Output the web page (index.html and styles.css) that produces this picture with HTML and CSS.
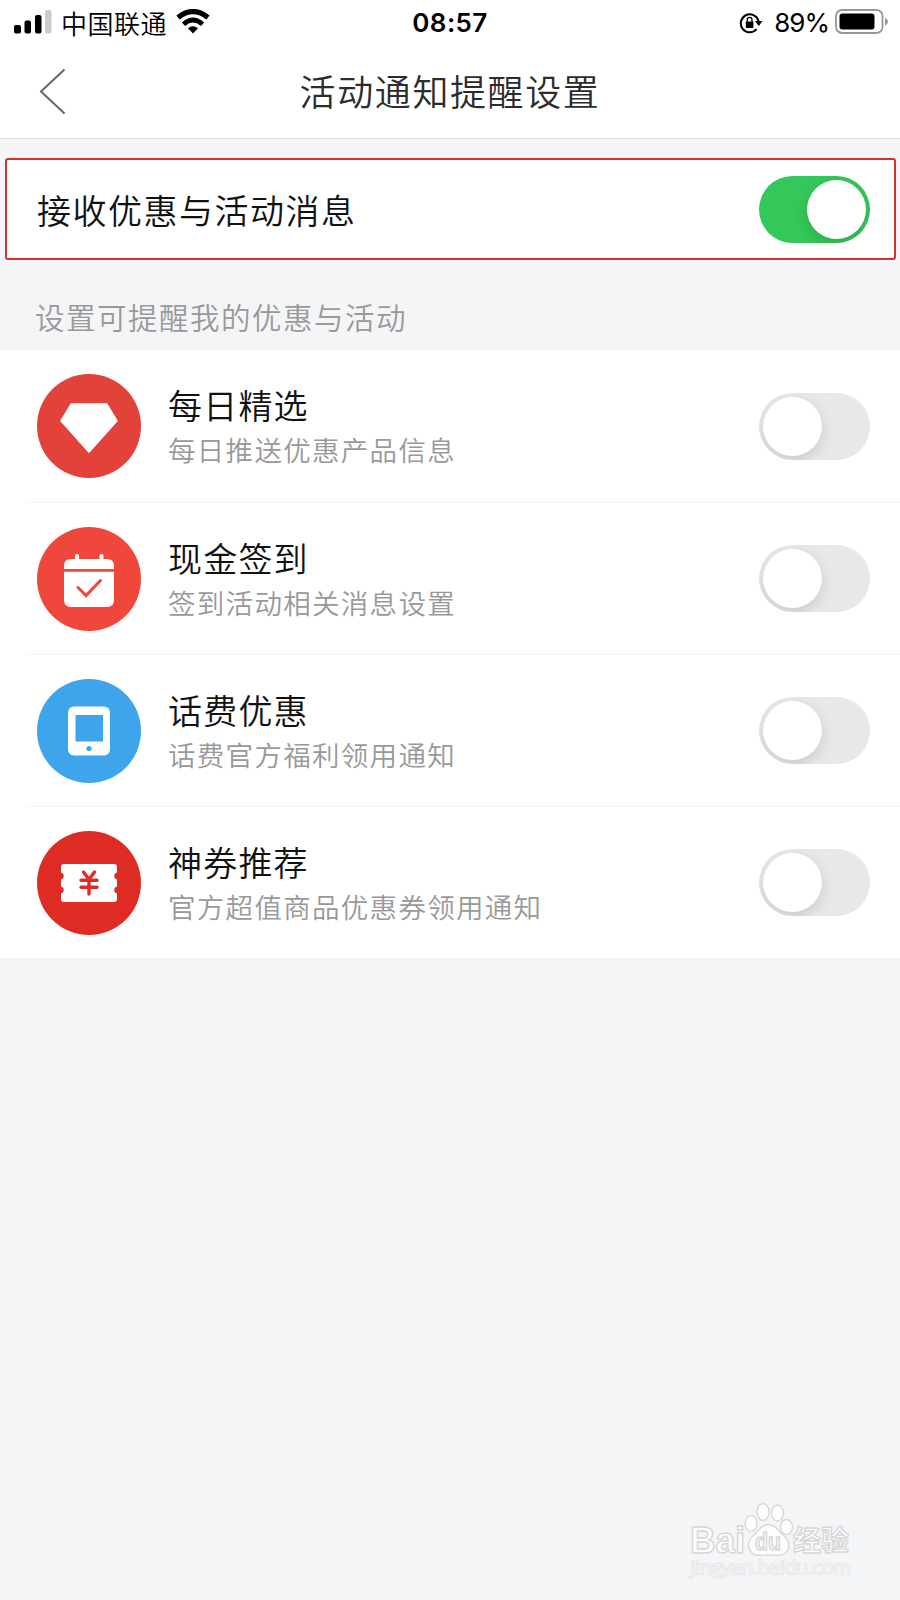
FILE: index.html
```html
<!DOCTYPE html>
<html lang="zh-CN">
<head>
<meta charset="utf-8">
<title>活动通知提醒设置</title>
<link rel="stylesheet" href="styles.css">
</head>

<body>
<!-- status bar -->
<div class="status">
	<div class="status-left">
		<svg class="signal" width="38" height="24" viewBox="0 0 38 24">
			<rect x="0" y="15" width="7" height="8.500" rx="2"/>
			<rect x="10.500" y="10.500" width="6.500" height="13" rx="2"/>
			<rect x="21" y="5" width="6.500" height="18.500" rx="2"/>
			<rect x="31" y="0" width="6.500" height="23.500" rx="2" fill="#ccc"/>
		</svg>
		<span class="carrier">中国联通</span>
		<svg class="wifi" width="34" height="25" viewBox="0 0 34 25">
			<path d="M2 8.500Q17 -3.500 32 8.500" fill="none" stroke="#000" stroke-width="5.200"/>
			<path d="M7.500 15.200Q17 7 26.500 15.200" fill="none" stroke="#000" stroke-width="4.800"/>
			<path d="M12 19.300Q17 15 22 19.300L17 24.500Z"/>
		</svg>
	</div>
	<div class="clock">08:57</div>
	<div class="status-right">
		<svg class="lock" width="24" height="22" viewBox="0 0 24 22">
			<path d="M17.600 17.200A9 9 0 1 1 19.500 9" fill="none" stroke="#000" stroke-width="2"/>
			<path d="M16 9H23.500L19.800 14Z"/>
			<rect x="6.800" y="9.500" width="7.600" height="6.500" rx="0.800"/>
			<path d="M8.200 10V8A2.400 2.600 0 0 1 13 8V10" fill="none" stroke="#000" stroke-width="1.300"/>
		</svg>
		<span class="percent">89%</span>
		<svg class="battery" width="54" height="25" viewBox="0 0 54 25">
			<rect x="1" y="1" width="46.500" height="23" rx="6" fill="none" stroke="#999" stroke-width="1.800"/>
			<rect x="4.500" y="4.500" width="35" height="16" rx="3"/>
			<path d="M50 9Q53 10 53 12.500Q53 15 50 16.500Z" fill="#999"/>
		</svg>
	</div>
</div>

<div class="navbar">
	<svg class="back" width="28" height="48" viewBox="0 0 28 48">
		<path d="M25.500 1.500L2 23.500L25.500 45.500" fill="none" stroke="#666" stroke-width="2"/>
	</svg>
	<h1>活动通知提醒设置</h1>
</div>

<div class="main-switch">
	<span>接收优惠与活动消息</span>
	<div class="toggle on"><i></i></div>
</div>

<h2>设置可提醒我的优惠与活动</h2>

<ul class="list">
	<li>
		<svg class="icon" width="104" height="104" viewBox="0 0 104 104">
			<circle cx="52" cy="52" r="52" fill="#e2423a"/>
			<path d="M34.500 30.500H69.500L79.500 46.800L52 77.500L24.500 46.800Z" fill="#fff" stroke="#fff" stroke-width="2.400" stroke-linejoin="round"/>
		</svg>
		<div class="text">
			<div class="name">每日精选</div>
			<div class="desc">每日推送优惠产品信息</div>
		</div>
		<div class="toggle"><i></i></div>
	</li>
	<li>
		<svg class="icon" width="104" height="104" viewBox="0 0 104 104">
			<circle cx="52" cy="52" r="52" fill="#f0473d"/>
			<path d="M27 42V39Q27 32 34 32H38V29Q38 27 40 27T42 29V32H62.500V29Q62.500 27 64.500 27T66.500 29V32H70Q77 32 77 39V42Z" fill="#fff"/>
			<path d="M27 44.800H77V73Q77 80 70 80H34Q27 80 27 73Z" fill="#fff"/>
			<path d="M41 60.500L49 68.500L63.500 53.500" fill="none" stroke="#f0473d" stroke-width="3" stroke-linecap="round"/>
		</svg>
		<div class="text">
			<div class="name">现金签到</div>
			<div class="desc">签到活动相关消息设置</div>
		</div>
		<div class="toggle"><i></i></div>
	</li>
	<li>
		<svg class="icon" width="104" height="104" viewBox="0 0 104 104">
			<circle cx="52" cy="52" r="52" fill="#3ea4ec"/>
			<rect x="31" y="27.500" width="42" height="49" rx="6" fill="#fff"/>
			<rect x="38.500" y="36" width="27.500" height="26.500" fill="#3ea4ec"/>
			<circle cx="52" cy="69.500" r="2.600" fill="#3ea4ec"/>
		</svg>
		<div class="text">
			<div class="name">话费优惠</div>
			<div class="desc">话费官方福利领用通知</div>
		</div>
		<div class="toggle"><i></i></div>
	</li>
	<li>
		<svg class="icon" width="104" height="104" viewBox="0 0 104 104">
			<circle cx="52" cy="52" r="52" fill="#de2c25"/>
			<path d="M27 33H77Q80 33 80 36V41.500A3.600 3.600 0 0 0 80 48.500V55.500A3.600 3.600 0 0 0 80 62.500V68Q80 71 77 71H27Q24 71 24 68V62.500A3.600 3.600 0 0 0 24 55.500V48.500A3.600 3.600 0 0 0 24 41.500V36Q24 33 27 33Z" fill="#fff"/>
			<path d="M46.500 41L52 48.500L57.500 41M44 49.300H60M44 56.300H60M52 49V63" fill="none" stroke="#de2c25" stroke-width="3.400" stroke-linecap="round"/>
		</svg>
		<div class="text">
			<div class="name">神券推荐</div>
			<div class="desc">官方超值商品优惠券领用通知</div>
		</div>
		<div class="toggle"><i></i></div>
	</li>
</ul>

<!-- watermark, lies over the page -->
<svg class="watermark" width="180" height="90" viewBox="0 0 180 90">
	<g class="mark">
		<text x="10" y="53" font-size="36" font-weight="700" textLength="55" lengthAdjust="spacingAndGlyphs">Bai</text>
		<ellipse cx="71" cy="23.500" rx="6" ry="8"/>
		<ellipse cx="83" cy="12" rx="6" ry="8.500"/>
		<ellipse cx="97.500" cy="13" rx="6" ry="8"/>
		<ellipse cx="106.500" cy="27" rx="6" ry="7.500"/>
		<path d="M88 24.500C96 24.500 98 31 103 35C109 40 110 45 108 50C104 57 96 55 88 55S73 57 70 50C67 45 69 39 74 35C79 31 81 24.500 88 24.500Z"/>
		<text class="du" x="75" y="50" font-size="23" font-weight="700" textLength="26" lengthAdjust="spacingAndGlyphs">du</text>
		<text class="cn" x="113" y="51" font-size="28" font-weight="700" textLength="56" lengthAdjust="spacingAndGlyphs">经验</text>
	</g>
	<text class="site" x="11" y="74" font-size="18" textLength="160" lengthAdjust="spacingAndGlyphs">jingyan.baidu.com</text>
</svg>
</body>
</html>
```
FILE: styles.css
```css
* {
	box-sizing: border-box;
}
body {
	margin: 0;
	height: 1600px;
	position: relative;
	background: #f4f5f7;
	font-family: "Noto Sans CJK SC", sans-serif;
	font-weight: 350;
	color: #111;
	overflow: hidden;
}
svg {
	display: block;
	flex: none;
}

/* status bar */
.status {
	display: grid;
	grid-template-columns: 1fr auto 1fr;
	align-items: center;
	height: 46px;
	padding: 0 12px 0 14px;
	background: #fff;
	color: #000;
}
.status-left {
	display: flex;
	align-items: center;
}
.status-right {
	display: flex;
	align-items: center;
	justify-content: flex-end;
}
.signal {
	margin-top: -3px;
}
.carrier {
	margin-left: 9px;
	font-size: 26px;
	line-height: 44px;
	letter-spacing: 0.5px;
}
.wifi {
	margin-left: 9px;
	margin-top: -3px;
}
.clock {
	margin-right: 2px;
	font: 600 26px/46px Inter, sans-serif;
	letter-spacing: 0.4px;
}
.percent {
	margin: 0 6px 0 11px;
	font: 400 26px/46px Inter, sans-serif;
	letter-spacing: -1px;
}
.battery {
	margin-top: -3px;
	margin-right: -1px;
}

/* title bar */
.navbar {
	display: grid;
	grid-template-columns: 100px 1fr 100px;
	align-items: center;
	height: 93px;
	background: #fff;
	border-bottom: 1px solid #dcdddf;
}
.back {
	margin-left: 39px;
}
h1 {
	margin: 0 0 4px;
	font-size: 36px;
	line-height: 48px;
	font-weight: 350;
	letter-spacing: 1.6px;
	text-align: center;
	color: #2c2c2c;
}

.main-switch {
	display: flex;
	align-items: center;
	justify-content: space-between;
	height: 102px;
	margin: 19px 4px 0 5px;
	padding: 0 24px 0 30px;
	background: #fff;
	border: 2px solid #d0342c;
	border-radius: 3px;
	font-size: 34px;
	letter-spacing: 1.5px;
}
h2 {
	margin: 0;
	height: 90px;
	padding: 34px 0 0 35px;
	font-size: 29.5px;
	line-height: 44px;
	font-weight: 350;
	letter-spacing: 1.5px;
	color: #999;
}

/* switches */
.toggle {
	flex: none;
	width: 111px;
	height: 67px;
	padding: 4px;
	border-radius: 34px;
	background: #e8e8eb;
	overflow: hidden;
}
.toggle i {
	display: block;
	width: 59px;
	height: 59px;
	border-radius: 50%;
	background: #fff;
	box-shadow: 0 5px 14px rgba(0, 0, 0, 0.13);
}
.on {
	background: #34c759;
}
.on i {
	margin-left: auto;
}

/* list */
.list {
	margin: 0;
	padding: 0;
	list-style: none;
	background: #fff;
}
.list li {
	display: flex;
	align-items: center;
	height: 152px;
	margin-left: 25px;
	padding: 0 30px 0 12px;
}
.list li + li {
	border-top: 1px solid #f4f4f5;
}
.text {
	flex: 1;
	margin-left: 27px;
	padding-top: 2px;
}
.name {
	font-size: 34px;
	line-height: 44px;
	letter-spacing: 1.2px;
}
.desc {
	font-size: 27.5px;
	line-height: 44px;
	letter-spacing: 1.3px;
	color: #999;
}

.watermark {
	position: absolute;
	left: 680px;
	top: 1500px;
	font-family: "Liberation Sans", "Noto Sans CJK SC", sans-serif;
}
.mark {
	fill: #fdfdfd;
	stroke: #d6d7d9;
	stroke-width: 1.4;
}
.mark .du {
	fill: #f4f5f7;
}
.site {
	font-family: "Open Sans", sans-serif;
	fill: #fcfcfc;
	stroke: #dfe0e2;
	stroke-width: 1.6;
	paint-order: stroke;
}
```
